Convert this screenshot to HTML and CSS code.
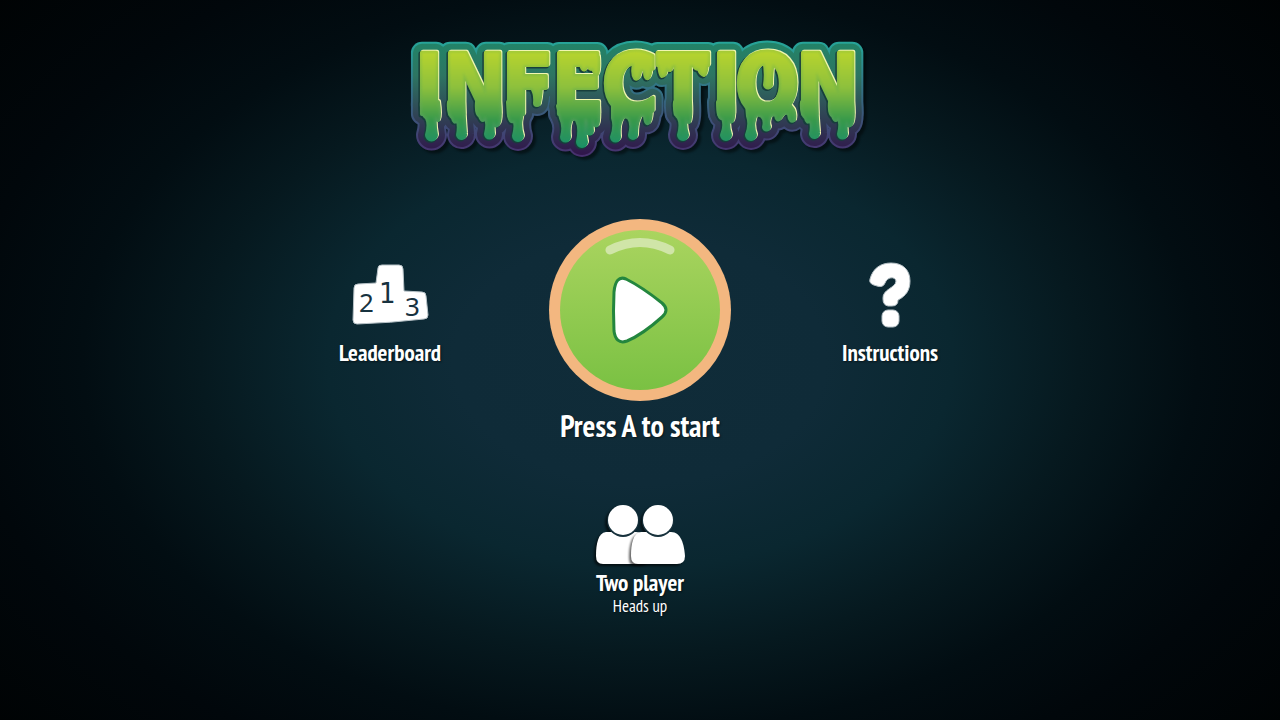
FILE: index.html
```html
<!DOCTYPE html>
<html lang="en">
<head>
<meta charset="utf-8">
<meta name="viewport" content="width=device-width, initial-scale=1">
<title>Infection</title>
<link rel="stylesheet" href="styles.css">
</head>
<body>
<main class="menu">
  <h1 class="logo">
    <svg class="logo-art" viewBox="0 0 460 124" role="img" aria-label="Infection">
      <defs>
        <linearGradient id="slime" gradientUnits="userSpaceOnUse" x1="0" y1="14" x2="0" y2="108">
          <stop offset="0" stop-color="#a5cb38"/><stop offset=".5" stop-color="#70b348"/><stop offset=".78" stop-color="#46995a"/><stop offset="1" stop-color="#199164"/>
        </linearGradient>
        <linearGradient id="core" gradientUnits="userSpaceOnUse" x1="0" y1="14" x2="0" y2="108">
          <stop offset="0" stop-color="#bad52d"/><stop offset=".4" stop-color="#8dc03d"/><stop offset=".75" stop-color="#37994b"/><stop offset="1" stop-color="#219064"/>
        </linearGradient>
        <linearGradient id="shell" gradientUnits="userSpaceOnUse" x1="0" y1="6" x2="0" y2="118">
          <stop offset="0" stop-color="#228468"/><stop offset=".3" stop-color="#2d7562"/><stop offset=".65" stop-color="#304455"/><stop offset="1" stop-color="#30164b"/>
        </linearGradient>
        <linearGradient id="rim" gradientUnits="userSpaceOnUse" x1="0" y1="4" x2="0" y2="120">
          <stop offset="0" stop-color="#26a699"/><stop offset=".5" stop-color="#35677f"/><stop offset="1" stop-color="#472f6d"/>
        </linearGradient>
        <g id="word">
          <text class="logo-word" y="78" x="5 33 92 142 192 247 302 325 386">INFECTION</text>
          <path d="M12 66H28Q30 80 28 84L25 80Q24 88 26 99a4 4 0 0 1-9 0Q20 88 17 82Q11 78 12 66Z
            M39 66H53Q54 84 55 98a3 3 0 0 1-7 1Q50 88 47 84Q44 88 43 82Q38 78 39 66Z
            M67 66H89Q91 84 88 88Q85 92 84 85Q82 88 83 98a3 3 0 0 1-7 0Q79 86 75 80Q73 88 70 80Q66 78 67 66Z
            M98 66H112Q112 78 111 82Q109 90 112 100a4 4 0 0 1-8 0Q107 88 104 84Q101 88 99 80Z
            M120 46h11Q131 58 129 67a2 2 0 0 1-4 0Q126 58 122 52Z
            M148 70H188Q189 86 187 89Q184 91 183 82Q181 86 182 95a2 2 0 0 1-5 0Q179 84 175 82Q173 94 176 106a4 4 0 0 1-8 0Q171 92 167 84Q162 80 160 86Q158 92 159 101a3 3 0 0 1-7 0Q155 90 151 82Z
            M168 21h20Q189 34 187 38Q184 38 183 31Q181 35 179 31Q177 28 175 33Q172 35 171 27Z
            M203 68Q222 80 240 66Q242 80 239 86Q236 90 235 80Q231 76 229 82Q226 88 226 99a3 3 0 0 1-6 0Q223 88 219 82Q214 78 211 84Q208 90 209 101a3 3 0 0 1-7 0Q206 90 203 82Z
            M222 22h18Q242 36 238 42Q235 43 235 35Q231 31 230 36Q228 45 225 42Q222 38 224 28Z
            M249 20H266Q262 32 260 34Q258 34 256 31Q256 40 252 40Q249 38 249 20Z
            M279 20H297Q297 38 294 39Q290 38 289 32Q286 34 284 30Z
            M265 66H280Q281 82 279 86Q276 86 276 80Q274 90 277 99a4 4 0 0 1-8 0Q272 88 269 82Q264 78 265 66Z
            M308 66H323Q324 82 322 85Q319 87 319 82Q317 90 320 99a4 4 0 0 1-8 0Q316 90 313 82Q308 84 308 66Z
            M337 68Q357 78 378 68Q386 74 384 84Q380 87 379 78Q375 74 370 82Q367 86 366 79Q362 76 360 80Q357 86 359 91a2 2 0 0 1-5 0Q356 84 352 80Q345 76 344 84Q342 90 345 99a4 4 0 0 1-8 0Q341 88 338 80Z
            M354 24h9Q361 38 361 48a3 3 0 0 1-6 1Q357 36 354 24Z
            M392 66H406Q407 84 408 97a3 3 0 0 1-7 1Q403 88 400 84Q397 88 396 82Q391 78 392 66Z
            M420 66H442Q444 84 441 88Q438 92 437 85Q435 88 436 98a3 3 0 0 1-7 0Q432 86 428 80Q426 88 423 80Q419 78 420 66Z"/>
        </g>
      </defs>
      <g class="logo-shadow"><use href="#word" class="layer-rim"/></g>
      <use href="#word" class="layer-shell"/>
      <use href="#word" class="layer-dark" x="-1" y="1"/>
      <use href="#word" class="layer-shine" x="1" y="-1"/>
      <use href="#word" class="layer-slime"/>
      <use href="#word" class="layer-core"/>
    </svg>
  </h1>

  <div class="row">
    <button class="item side" type="button">
      <svg class="icon-side" viewBox="0 0 84 72" aria-hidden="true">
        <path class="card" d="M6 28q0-4 4-4l18-1 2-15q0-3 4-3l17 0q4 0 4 4l1 22 18 1q4 0 4 4l2 19q0 4-4 4-34 4-67 5-4 0-4-4z"/>
        <text class="digit" x="11" y="52">2</text>
        <text class="digit digit-first" x="31" y="43">1</text>
        <text class="digit" x="57" y="56">3</text>
      </svg>
      <span class="label">Leaderboard</span>
    </button>

    <button class="item" type="button">
      <svg class="icon-play" viewBox="0 0 182 182" aria-hidden="true">
        <defs><linearGradient id="lime" x1="0" y1="0" x2="0" y2="1"><stop offset="0" stop-color="#aad45f"/><stop offset="1" stop-color="#7ac143"/></linearGradient></defs>
        <circle cx="91" cy="91" r="91" fill="#f3b780"/>
        <circle cx="91" cy="91" r="80" fill="url(#lime)"/>
        <path d="M61 31q30-15 60 0" fill="none" stroke="#d0e5a8" stroke-width="9" stroke-linecap="round"/>
        <path d="M65 73C66 62 70 57 77 60C91 67 103 76 113 84Q121 91 113 98C103 107 90 117 78 122C70 125 66 120 65 112Q64 92 65 73Z" fill="#fff" stroke="#23863e" stroke-width="3"/>
      </svg>
      <span class="label label-large">Press A to start</span>
    </button>

    <button class="item side" type="button">
      <svg class="icon-side" viewBox="0 0 84 72" aria-hidden="true">
        <path class="card" d="M22 19C25 8 33 3 43 3C55 3 62 10 62 21C62 30 58 36 50 40Q50 46 44 46H40Q35 45 35 39C34 29 48 28 48 21C47 16 39 17 37 23Q35 28 29 26Q20 24 22 19Z"/>
        <rect class="card" x="34" y="50" width="17" height="17" rx="6"/>
      </svg>
      <span class="label">Instructions</span>
    </button>
  </div>

  <button class="item two-player" type="button">
    <svg class="icon-players" viewBox="0 0 100 68" aria-hidden="true">
      <defs>
        <g id="player">
          <path d="M16 31H46C56 31 59 43 60 55Q60 63 52 63H13Q6 63 6 55C6 43 8 32 16 31Z"/>
          <circle cx="33" cy="20" r="16" class="neck"/>
          <circle cx="33" cy="19" r="15"/>
        </g>
      </defs>
      <use href="#player" class="person"/>
      <use href="#player" class="person" x="35"/>
    </svg>
    <span class="label">Two player</span>
    <span class="sublabel">Heads up</span>
  </button>
</main>
</body>
</html>
```

FILE: styles.css
```css
* { box-sizing: border-box; }

body {
  margin: 0;
  min-height: 100vh;
  color: #fff;
  font-family: "PT Sans Narrow", "Liberation Sans Narrow", "Open Sans Condensed", "Roboto Condensed", "Open Sans", sans-serif;
  background: radial-gradient(ellipse 66% 78% at center, #102c39 0%, #0f2b38 22%, #0a2730 37%, #06191f 52%, #020d12 66%, #01070b 80%, #000304 100%);
}

.menu {
  display: flex;
  flex-direction: column;
  align-items: center;
  min-height: 100vh;
  padding: 36px 16px 24px;
}

.logo { margin: 0; line-height: 0; }
.logo-art { width: 460px; max-width: 100%; overflow: visible; }
.logo-word { font: bold 84px "DejaVu Sans Condensed", "DejaVu Sans", sans-serif; }
.logo-art use { stroke-linejoin: round; }
.logo-shadow { filter: drop-shadow(3px 3px 1px rgba(0, 0, 0, .45)); }
.layer-rim { fill: url(#rim); stroke: url(#rim); stroke-width: 22px; }
.layer-shell { fill: url(#shell); stroke: url(#shell); stroke-width: 18px; }
.layer-dark { fill: #173e3c; stroke: #173e3c; stroke-width: 5px; }
.layer-shine { fill: #f2f6b0; stroke: #f2f6b0; stroke-width: 4px; }
.layer-slime { fill: url(#slime); stroke: url(#slime); stroke-width: 4px; }
.layer-core { fill: url(#core); filter: blur(1px); }

.row {
  display: grid;
  grid-template-columns: repeat(3, 250px);
  justify-content: center;
  margin-top: 59px;
}

.item {
  display: flex;
  flex-direction: column;
  align-items: center;
  padding: 0;
  border: 0;
  background: none;
  color: inherit;
  font: inherit;
  cursor: pointer;
}

.side { padding-top: 41px; }
.icon-side { width: 84px; height: 72px; }
.icon-play { width: 182px; height: 182px; }
.icon-players { width: 100px; height: 68px; }

.card { fill: #fff; stroke: #b8c3c8; stroke-width: 1px; }
.digit { fill: #17323f; font: 26px "Noto Sans", sans-serif; }
.digit-first { font: 29px "DejaVu Sans Condensed", "DejaVu Sans", sans-serif; }

.person { fill: #fff; filter: drop-shadow(-2px 2px 1px rgba(0, 0, 0, .6)); }
.neck { fill: #17313c; }

.label {
  font-size: 23px;
  line-height: 30px;
  font-weight: bold;
  margin-top: 6px;
  text-shadow: 1px 1px 2px rgba(0, 0, 0, .5);
}
.label-large { font-size: 30px; line-height: 38px; }
.two-player { margin-top: 56px; }
.two-player .label { margin-top: 0; line-height: 28px; }
.sublabel { font-size: 17px; line-height: 18px; text-shadow: 1px 1px 2px rgba(0, 0, 0, .5); }
```
